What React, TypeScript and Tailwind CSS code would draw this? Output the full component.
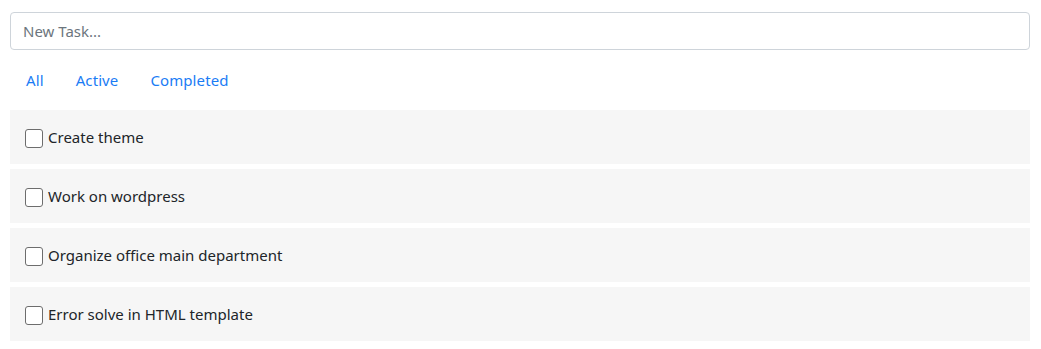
import React, { useState } from "react";

type Task = { id: number; title: string; done: boolean };

const initialTasks: Task[] = [
  { id: 1, title: "Create theme", done: false },
  { id: 2, title: "Work on wordpress", done: false },
  { id: 3, title: "Organize office main department", done: false },
  { id: 4, title: "Error solve in HTML template", done: false },
];

const filters = ["All", "Active", "Completed"] as const;

export default function App() {
  const [tasks, setTasks] = useState<Task[]>(initialTasks);
  const [text, setText] = useState("");
  const [filter, setFilter] = useState<(typeof filters)[number]>("All");

  const toggle = (id: number) =>
    setTasks((ts) => ts.map((t) => (t.id === id ? { ...t, done: !t.done } : t)));

  const visible = tasks.filter((t) =>
    filter === "All" ? true : filter === "Active" ? !t.done : t.done
  );

  return (
    <div
      className="w-full bg-white pl-[10px] pr-[11px] pt-[12px] text-[#212529]"
      style={{ fontFamily: '"Noto Sans", "Open Sans", sans-serif' }}
    >
      <input
        value={text}
        onChange={(e) => setText(e.target.value)}
        onKeyDown={(e) => {
          if (e.key === "Enter" && text.trim()) {
            setTasks((ts) => [...ts, { id: Date.now(), title: text.trim(), done: false }]);
            setText("");
          }
        }}
        placeholder="New Task..."
        className="block h-[38px] w-full rounded-[4px] border border-[#ced4da] px-[12px] text-[15px] outline-none placeholder:text-[#6c757d]"
      />

      {/* Filters */}
      <ul className="mt-[10px] flex">
        {filters.map((f) => (
          <li key={f}>
            <button
              onClick={() => setFilter(f)}
              className="block px-[16px] py-[8px] text-[15px] leading-[24px] tracking-[0.1px] text-[#1a7cf5]"
            >
              {f}
            </button>
          </li>
        ))}
      </ul>

      {/* Tasks */}
      <ul className="mt-[10px] flex flex-col gap-[5px]">
        {visible.map((t) => (
          <li
            key={t.id}
            className="flex h-[54px] items-center bg-[#f6f6f6] px-[15px] text-[15px]"
          >
            <label className="flex cursor-pointer items-center gap-[5px]">
              <span
                onClick={() => toggle(t.id)}
                className="mt-[3px] flex h-[19px] w-[18px] items-center justify-center rounded-[3px] border border-[#6d6d6d] bg-white"
              >
                {t.done && (
                  <svg viewBox="0 0 16 16" className="h-[12px] w-[12px]" fill="none" stroke="#333" strokeWidth="2.2">
                    <path d="M3 8.5l3 3 7-7" />
                  </svg>
                )}
              </span>
              <span className={t.done ? "line-through" : ""}>{t.title}</span>
            </label>
          </li>
        ))}
      </ul>
    </div>
  );
}
